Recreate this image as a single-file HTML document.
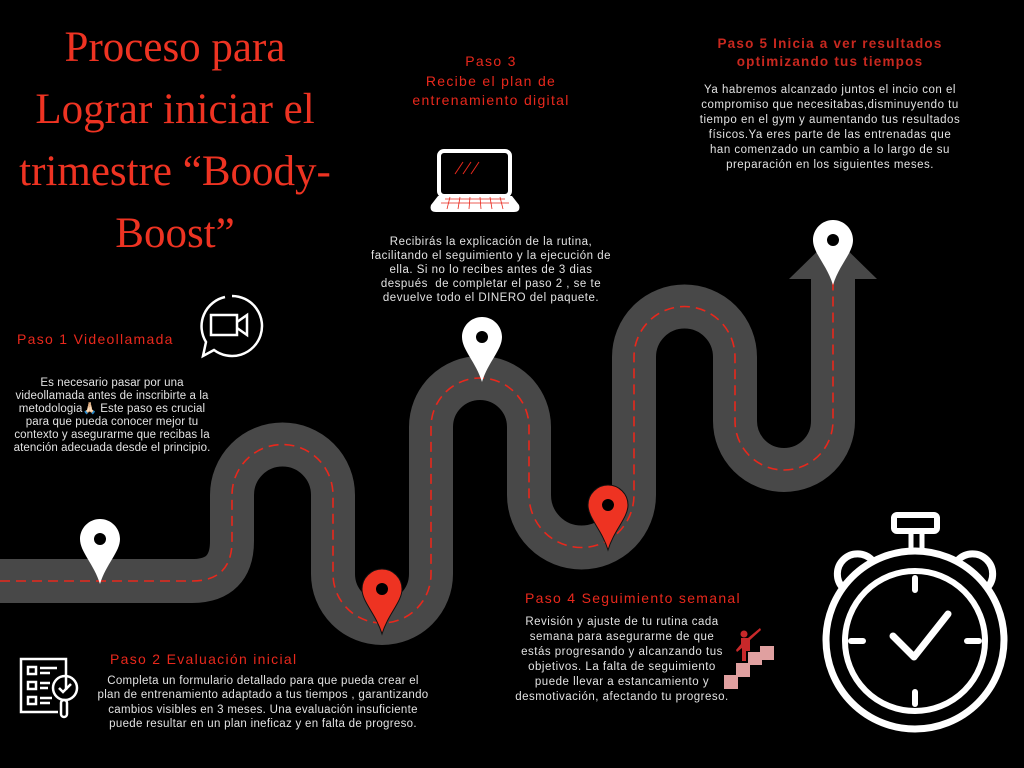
<!DOCTYPE html>
<html><head><meta charset="utf-8"><style>
body{margin:0;width:1024px;height:768px;background:#000;overflow:hidden;position:relative;font-family:"Liberation Sans",sans-serif}
.t{position:absolute;text-align:center;white-space:nowrap}
.title{font-family:"Liberation Serif",serif;color:#ee3322;font-size:43px;line-height:62px;left:0;width:350px;top:17px}
.h{position:absolute;color:#e8281c;font-size:14px;letter-spacing:1.3px;white-space:nowrap}
.b{position:absolute;color:#e2e2e2;font-size:11.5px;letter-spacing:0.5px;text-align:center;white-space:nowrap}
svg{position:absolute;left:0;top:0}
</style></head><body>
<svg width="1024" height="768" viewBox="0 0 1024 768">
<defs>
<g id="pin"><path d="M0,0 C-11,0 -20,9 -20,20 C-20,33 -6,45 0,65 C6,45 20,33 20,20 C20,9 11,0 0,0Z"/></g>
</defs>
<path d="M0,581 H192 Q232,581 232,541 V495 A50.5,50.5 0 0 1 333,495 V574 A49,49 0 0 0 431,574 V427 A49,49 0 0 1 529,427 V495 A52.5,52.5 0 0 0 634,495 V357 A50.5,50.5 0 0 1 735,357 V421 A49,49 0 0 0 833,421 V270" fill="none" stroke="#484848" stroke-width="44"/>
<polygon points="789,279 877,279 833,236" fill="#484848"/>
<path d="M0,581 H192 Q232,581 232,541 V495 A50.5,50.5 0 0 1 333,495 V574 A49,49 0 0 0 431,574 V427 A49,49 0 0 1 529,427 V495 A52.5,52.5 0 0 0 634,495 V357 A50.5,50.5 0 0 1 735,357 V421 A49,49 0 0 0 833,421 V270" fill="none" stroke="#e8281c" stroke-width="1.6" stroke-dasharray="10 6"/>
<g fill="#fff"><use href="#pin" x="100" y="519"/><use href="#pin" x="482" y="317"/><use href="#pin" x="833" y="220"/></g>
<g fill="#ee3322" stroke="#111" stroke-width="1"><use href="#pin" x="382" y="569"/><use href="#pin" x="608" y="485"/></g>
<g fill="#000"><circle cx="100" cy="539" r="6"/><circle cx="482" cy="337" r="6"/><circle cx="833" cy="240" r="6"/><circle cx="382" cy="589" r="6"/><circle cx="608" cy="505" r="6"/></g>
<g fill="none" stroke="#fff" stroke-width="2.5">
<path d="M232,296 A30,30 0 1 1 214,350 L203,356 L206,342 A30,30 0 0 1 225,297"/>
<rect x="211" y="315" width="26" height="20"/><path d="M237,322 L247,315 V335 L237,328"/>
</g>
<g fill="none">
<rect x="439" y="151" width="71" height="45" rx="5" stroke="#fff" stroke-width="4"/>
<path d="M431,205 L438,196 H512 L519,205 Q521,212 514,212 H436 Q429,212 431,205Z" fill="#fff"/>
<path d="M445,199 H505 M441,203 H509 M450,197 L447,209 M460,197 L458,209 M470,197 L469,209 M480,197 L481,209 M490,197 L492,209 M500,197 L503,209" stroke="#e8281c" stroke-width="0.8"/>
<path d="M455,174 L463,162 M463,174 L471,162 M471,174 L479,162" stroke="#e8281c" stroke-width="1"/>
</g>
<g fill="none" stroke="#fff" stroke-width="2.5">
<path d="M66,690 V659 H21 V712 H58"/>
<rect x="28" y="667" width="8" height="7"/><rect x="28" y="682" width="8" height="7"/><rect x="28" y="697" width="8" height="7"/>
<path d="M40,668 H57 M40,673 H50 M40,683 H50 M40,688 H48 M40,698 H52 M40,703 H50"/>
<circle cx="65" cy="688" r="12"/><path d="M59,688 L63,692 L71,684"/><rect x="61" y="700" width="6" height="17" rx="3"/>
</g>
<g fill="#c8282a"><circle cx="744" cy="634" r="3.5"/><path d="M741,638 H748 L760,628 L761,630 L750,640 V651 H746 V661 H742 V648 L737,652 L736,650 L741,644Z"/></g>
<g fill="#e0a0a0"><rect x="724" y="675" width="14" height="14"/><rect x="736" y="663" width="14" height="14"/><rect x="748" y="652" width="14" height="13"/><rect x="760" y="646" width="14" height="14"/></g>
<g fill="none" stroke="#fff">
<rect x="894" y="515" width="43" height="16" rx="3" stroke-width="6"/>
<path d="M911,532 V550 M922,532 V550" stroke-width="5"/>
<path d="M843,588 A20,20 0 0 1 872,560" stroke-width="7"/>
<path d="M987,588 A20,20 0 0 0 958,560" stroke-width="7"/>
<circle cx="915" cy="640" r="89" stroke-width="7"/>
<circle cx="915" cy="641" r="70" stroke-width="6"/>
<path d="M915,578 V590 M915,692 V704 M851,641 H863 M967,641 H979" stroke-width="6" stroke-linecap="round"/>
<path d="M893,636 L914,657 L948,614" stroke-width="7" stroke-linecap="round" stroke-linejoin="round"/>
</g>
</svg>
<div class="t title">Proceso para<br>Lograr iniciar el<br>trimestre “Boody-<br>Boost”</div>
<div class="h" style="left:17px;top:331px">Paso 1 Videollamada</div>
<div class="b" style="left:2px;width:220px;top:377px;line-height:13px;letter-spacing:0.1px">Es necesario pasar por una<br>videollamada antes de inscribirte a la<br>metodologia🙏🏻 Este paso es crucial<br>para que pueda conocer mejor tu<br>contexto y asegurarme que recibas la<br>atención adecuada desde el principio.</div>
<div class="h" style="left:381px;width:220px;text-align:center;top:52px;line-height:19.5px">Paso 3<br>Recibe el plan de<br>entrenamiento digital</div>
<div class="b" style="left:351px;width:280px;top:235px;line-height:14px">Recibirás la explicación de la rutina,<br>facilitando el seguimiento y la ejecución de<br>ella. Si no lo recibes antes de 3 dias<br>después &nbsp;de completar el paso 2 , se te<br>devuelve todo el DINERO del paquete.</div>
<div class="h" style="left:690px;width:280px;text-align:center;top:35px;line-height:18px;color:#c8281f;font-weight:bold;font-size:13.5px;letter-spacing:1.2px">Paso 5 Inicia a ver resultados<br>optimizando tus tiempos</div>
<div class="b" style="left:680px;width:300px;top:83px;line-height:15px">Ya habremos alcanzado juntos el incio con el<br>compromiso que necesitabas,disminuyendo tu<br>tiempo en el gym y aumentando tus resultados<br>físicos.Ya eres parte de las entrenadas que<br>han comenzado un cambio a lo largo de su<br>preparación en los siguientes meses.</div>
<div class="h" style="left:110px;top:651px">Paso 2 Evaluación inicial</div>
<div class="b" style="left:40px;width:446px;top:674px;line-height:14.3px;letter-spacing:0.3px">Completa un formulario detallado para que pueda crear el<br>plan de entrenamiento adaptado a tus tiempos , garantizando<br>cambios visibles en 3 meses. Una evaluación insuficiente<br>puede resultar en un plan ineficaz y en falta de progreso.</div>
<div class="h" style="left:525px;top:590px">Paso 4 Seguimiento semanal</div>
<div class="b" style="left:497px;width:250px;top:615px;line-height:15px">Revisión y ajuste de tu rutina cada<br>semana para asegurarme de que<br>estás progresando y alcanzando tus<br>objetivos. La falta de seguimiento<br>puede llevar a estancamiento y<br>desmotivación, afectando tu progreso.</div>
</body></html>
